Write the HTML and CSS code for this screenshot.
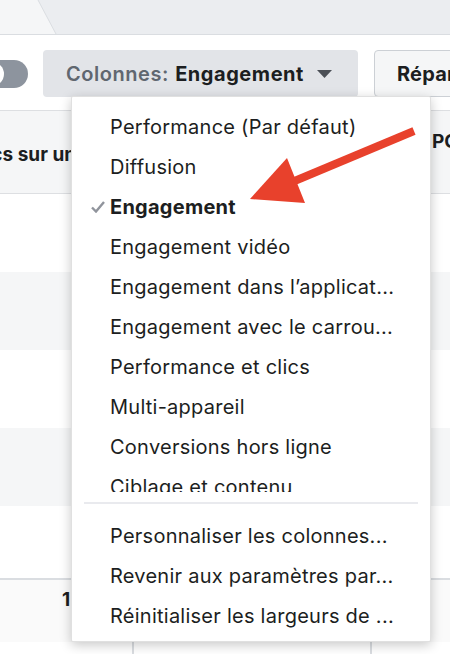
FILE: index.html
```html
<!DOCTYPE html>
<html lang="fr">
<head>
<meta charset="utf-8">
<title>Colonnes</title>
<link rel="stylesheet" href="styles.css">
</head>
<body>
<div class="page">
  <div class="tabs">
    <svg class="tab" width="60" height="34" viewBox="0 0 60 34"><polygon points="0,0 38,0 56,34 0,34" fill="#f5f6f7"/><line x1="38" y1="0" x2="56" y2="34" stroke="#dadde1" stroke-width="1"/></svg>
  </div>
  <div class="toolbar">
    <div class="toggle"><span class="knob"></span></div>
    <div class="btn btn-columns"><span class="muted">Colonnes:</span>&nbsp;<b>Engagement</b><svg class="caret" width="15" height="8" viewBox="0 0 15 8"><polygon points="0,0 15,0 7.5,8" fill="#4b4f56"/></svg></div>
    <div class="btn btn-split">Répartition</div>
  </div>
  <div class="table">
    <div class="row head"><div class="cell c1">Clics sur un lien</div><div class="cell c2">Coût par résultat</div><div class="cell c3">PORTÉE</div></div>
    <div class="row"><div class="cell c1"></div><div class="cell c2"></div><div class="cell c3"></div></div>
    <div class="row alt"><div class="cell c1"></div><div class="cell c2"></div><div class="cell c3"></div></div>
    <div class="row"><div class="cell c1"></div><div class="cell c2"></div><div class="cell c3"></div></div>
    <div class="row alt"><div class="cell c1"></div><div class="cell c2"></div><div class="cell c3"></div></div>
    <div class="row short"><div class="cell c1"></div><div class="cell c2"></div><div class="cell c3"></div></div>
    <div class="row total"><div class="cell c1">1 204</div><div class="cell c2"></div><div class="cell c3"></div></div>
    <div class="row cols"><div class="cell c1"></div><div class="cell c2"></div><div class="cell c3"></div></div>
  </div>

  <div class="menu">
    <div class="menu-list">
      <div class="item">Performance (Par défaut)</div>
      <div class="item">Diffusion</div>
      <div class="item selected"><svg class="check" width="14" height="12" viewBox="0 0 14 12"><path d="M1 6.5 L5 10.5 L13 1" fill="none" stroke="#90949c" stroke-width="2.4"/></svg>Engagement</div>
      <div class="item">Engagement vidéo</div>
      <div class="item">Engagement dans l’applicat...</div>
      <div class="item">Engagement avec le carrou...</div>
      <div class="item">Performance et clics</div>
      <div class="item">Multi-appareil</div>
      <div class="item">Conversions hors ligne</div>
      <div class="item">Ciblage et contenu</div>
      <div class="item">Messages</div>
    </div>
    <div class="sep"></div>
    <div class="menu-foot">
      <div class="item">Personnaliser les colonnes...</div>
      <div class="item">Revenir aux paramètres par...</div>
      <div class="item">Réinitialiser les largeurs de ...</div>
    </div>
  </div>

  <svg class="arrow" width="450" height="654" viewBox="0 0 450 654">
    <line x1="414" y1="131" x2="285" y2="185" stroke="#e8412c" stroke-width="8"/>
    <polygon points="250,199 287,158 305,203" fill="#e8412c"/>
  </svg>
</div>
</body>
</html>
```

FILE: styles.css
```css
* { box-sizing: border-box; }
html, body { margin: 0; padding: 0; }
body {
  width: 450px;
  height: 654px;
  overflow: hidden;
  background: #fff;
  font-family: Inter, "Liberation Sans", Arial, sans-serif;
  color: #1c1e21;
}
.page {
  position: relative;
  width: 450px;
  height: 654px;
  overflow: hidden;
}
.tabs {
  height: 35px;
  background: #ebedf0;
  border-bottom: 1px solid #dadde1;
  display: flex;
}
.tab { display: block; }

.toolbar {
  margin-top: 15px;
  height: 47px;
  display: flex;
  align-items: center;
}
.toolbar > * { flex: none; }
.toggle {
  width: 48px;
  height: 28px;
  margin-left: -20px;
  border-radius: 14px;
  background: #8d949e;
  display: flex;
  align-items: center;
  padding-left: 2px;
}
.knob {
  width: 24px;
  height: 24px;
  border-radius: 50%;
  background: #fff;
  margin-left: -2px;
}
.btn {
  height: 47px;
  border-radius: 4px;
  display: flex;
  align-items: center;
  font-size: 20px;
  letter-spacing: 0.55px;
  white-space: nowrap;
}
.btn-columns {
  margin-left: 15px;
  width: 315px;
  background: #e2e4e8;
  padding-left: 23px;
  color: #1c1e21;
}
.btn-columns .muted { color: #606770; font-weight: 600; }
.btn-columns b { font-weight: 700; }
.caret { margin-left: 13px; }
.btn-split {
  margin-left: 16px;
  width: 120px;
  background: #f5f6f7;
  border: 1px solid #ccd0d5;
  padding-left: 22px;
  font-weight: 700;
  letter-spacing: 0.2px;
}

.table { margin-top: 13px; }
.row {
  display: grid;
  grid-template-columns: 332px 240px 200px;
  margin-left: -200px;
  height: 78px;
}
.row.head {
  height: 84px;
  background: #f5f6f7;
  border-top: 1px solid #dddfe2;
  border-bottom: 1px solid #dddfe2;
  font-weight: 700;
  font-size: 19px;
}
.row.head .cell { display: flex; align-items: center; }
.row.head .c1 { justify-content: flex-end; padding-right: 18px; padding-top: 4px; }
.row.head .c3 { align-items: flex-start; padding-top: 19px; padding-left: 60px; }
.row.alt { background: #f5f6f7; }
.row.short { height: 74px; border-bottom: 2px solid #dadde1; }
.row.total {
  height: 62px;
  background: #fafafa;
  font-weight: 700;
  font-size: 19px;
}
.row.total .c1 { padding-left: 262px; padding-top: 8px; white-space: nowrap; }
.row.cols .c2 { border-left: 2px solid #dadde1; border-right: 2px solid #dadde1; }
.row.cols { height: 20px; }

.menu {
  position: absolute;
  left: 71px;
  top: 96px;
  width: 360px;
  height: 546px;
  background: #fff;
  border: 1px solid rgba(0,0,0,0.12);
  border-radius: 2px;
  box-shadow: 0 3px 12px rgba(0,0,0,0.22);
  display: flex;
  flex-direction: column;
}
.menu-list {
  height: 395px;
  overflow: hidden;
  padding-top: 10px;
}
.item {
  height: 40px;
  display: flex;
  align-items: center;
  padding-left: 38px;
  font-size: 20px;
  letter-spacing: 0.25px;
  color: #1c1e21;
  white-space: nowrap;
  position: relative;
}
.item.selected { font-weight: 700; }
.check { position: absolute; left: 19px; top: 14px; }
.sep {
  margin: 10px 12px 12px;
  height: 2px;
  background: #e9eaee;
}
.arrow { position: absolute; left: 0; top: 0; }
```
